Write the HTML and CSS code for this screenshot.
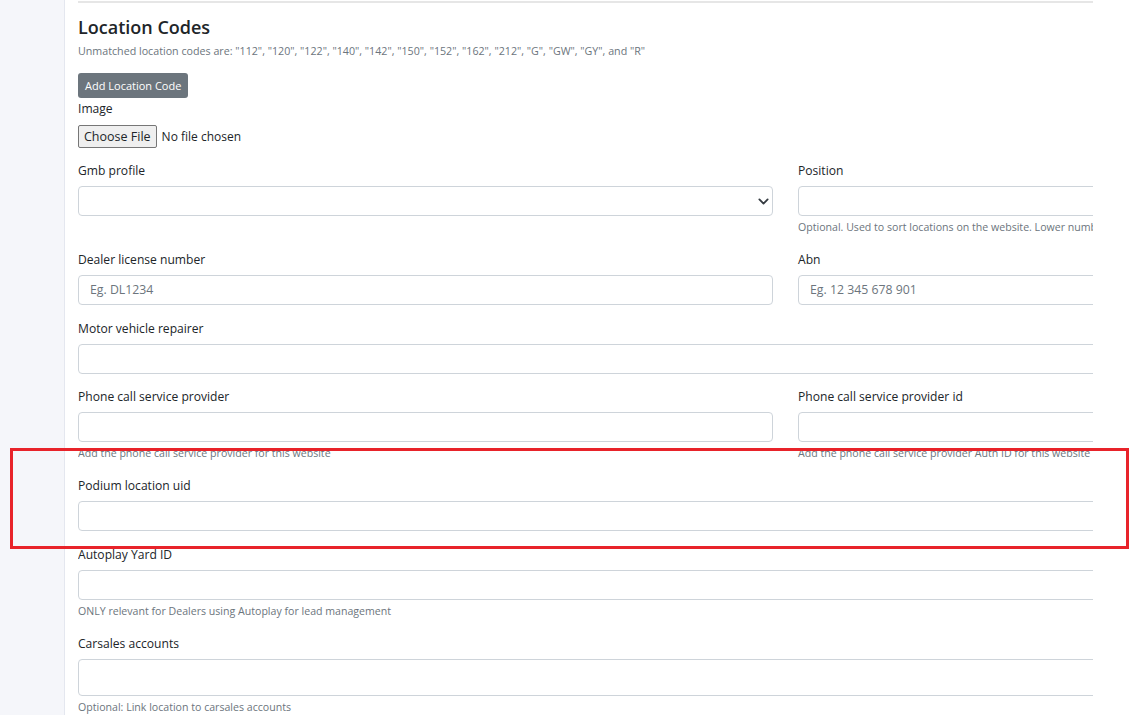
FILE: index.html
```
<!DOCTYPE html>
<html>
<head>
<meta charset="utf-8">
<link rel="stylesheet" href="styles.css">
</head>
<body>
<div class="page">
  <aside class="sidebar"></aside>
  <main class="main">
    <div class="clip">
      <div class="form">
        <hr class="rule">
        <h2 class="title">Location Codes</h2>
        <p class="muted small">Unmatched location codes are: "112", "120", "122", "140", "142", "150", "152", "162", "212", "G", "GW", "GY", and "R"</p>
        <button class="btn">Add Location Code</button>
        <div class="group group-file">
          <label class="label">Image</label>
          <div class="file">
            <span class="file-btn">Choose File</span>
            <span class="file-text">No file chosen</span>
          </div>
        </div>
        <div class="row">
          <div class="group">
            <label class="label">Gmb profile</label>
            <div class="input select">
              <svg class="chev" width="11" height="11" viewBox="0 0 16 16"><path d="M2 5l6 6 6-6" fill="none" stroke="#343a40" stroke-width="2.6" stroke-linecap="round" stroke-linejoin="round"/></svg>
            </div>
          </div>
          <div class="group">
            <label class="label">Position</label>
            <div class="input"></div>
            <div class="help">Optional. Used to sort locations on the website. Lower numbers appear first</div>
          </div>
        </div>
        <div class="row">
          <div class="group">
            <label class="label">Dealer license number</label>
            <div class="input"><span class="ph">Eg. DL1234</span></div>
          </div>
          <div class="group">
            <label class="label">Abn</label>
            <div class="input"><span class="ph">Eg. 12 345 678 901</span></div>
          </div>
        </div>
        <div class="group">
          <label class="label">Motor vehicle repairer</label>
          <div class="input"></div>
        </div>
        <div class="row">
          <div class="group">
            <label class="label">Phone call service provider</label>
            <div class="input"></div>
            <div class="help">Add the phone call service provider for this website</div>
          </div>
          <div class="group">
            <label class="label">Phone call service provider id</label>
            <div class="input"></div>
            <div class="help">Add the phone call service provider Auth ID for this website</div>
          </div>
        </div>
        <div class="group">
          <label class="label">Podium location uid</label>
          <div class="input"></div>
        </div>
        <div class="group">
          <label class="label">Autoplay Yard ID</label>
          <div class="input"></div>
          <div class="help">ONLY relevant for Dealers using Autoplay for lead management</div>
        </div>
        <div class="group">
          <label class="label">Carsales accounts</label>
          <div class="input tall"></div>
          <div class="help">Optional: Link location to carsales accounts</div>
        </div>
      </div>
    </div>
  </main>
</div>
<div class="highlight"></div>
</body>
</html>
```
FILE: styles.css
```
* { box-sizing: border-box; }
html, body { margin: 0; padding: 0; }
body {
  font-family: "Open Sans", "Noto Sans", sans-serif;
  color: #212529;
  background: #fff;
  width: 1129px;
  height: 715px;
  overflow: hidden;
  position: relative;
}
.page { display: flex; height: 715px; }
.sidebar {
  width: 65px;
  flex: none;
  background: #f5f6fa;
  border-right: 1px solid #e4e7ef;
}
.main { flex: 1; padding-left: 13px; }
.clip { width: 1015px; overflow: hidden; height: 715px; }
.form { width: 1415px; }
.rule {
  margin: 0;
  margin-top: 1px;
  width: 1015px;
  border: 0;
  border-top: 2px solid #e6e6e6;
}
.title {
  margin: 12px 0 0;
  font-size: 18px;
  line-height: 24px;
  font-weight: 600;
}
.small { font-size: 10.7px; }
.muted { color: #6c757d; }
p.small { margin: 4px 0 0; line-height: 16px; }
.btn {
  display: block;
  margin-top: 14px;
  height: 25px;
  padding: 0 7px;
  background: #6c757d;
  color: #fff;
  border: 0;
  border-radius: 3px;
  font-family: inherit;
  font-size: 11px;
}
.group { margin-bottom: 14.8px; }
.group-file { margin-top: 2px; margin-bottom: 14px; }
.label {
  display: block;
  font-size: 12.1px;
  line-height: 18px;
  margin-bottom: 6px;
}
.group-file .label { margin-bottom: 7px; }
.file { display: flex; align-items: center; height: 23px; }
.file-btn {
  height: 23px;
  line-height: 21px;
  padding: 0 5px;
  border: 1px solid #767676;
  border-radius: 2px;
  background: #efefef;
  font-size: 12.5px;
}
.file-text { margin-left: 5px; font-size: 12px; }
.row { display: grid; grid-template-columns: 695px 695px; column-gap: 25px; }
.input {
  height: 30px;
  border: 1px solid #ced4da;
  border-radius: 4px;
  display: flex;
  align-items: center;
  padding: 0 11px;
}
.input.tall { height: 37px; }
.select { justify-content: flex-end; padding-right: 3px; }
.chev { margin-right: 0; }
.ph { color: #6c757d; font-size: 12.3px; }
.help {
  margin-top: 3px;
  font-size: 10.6px;
  line-height: 17px;
  color: #6c757d;
  white-space: nowrap;
}
.highlight {
  position: absolute;
  left: 10px;
  top: 448px;
  width: 1119px;
  height: 101px;
  border: 3px solid #e8232a;
  pointer-events: none;
}
```
